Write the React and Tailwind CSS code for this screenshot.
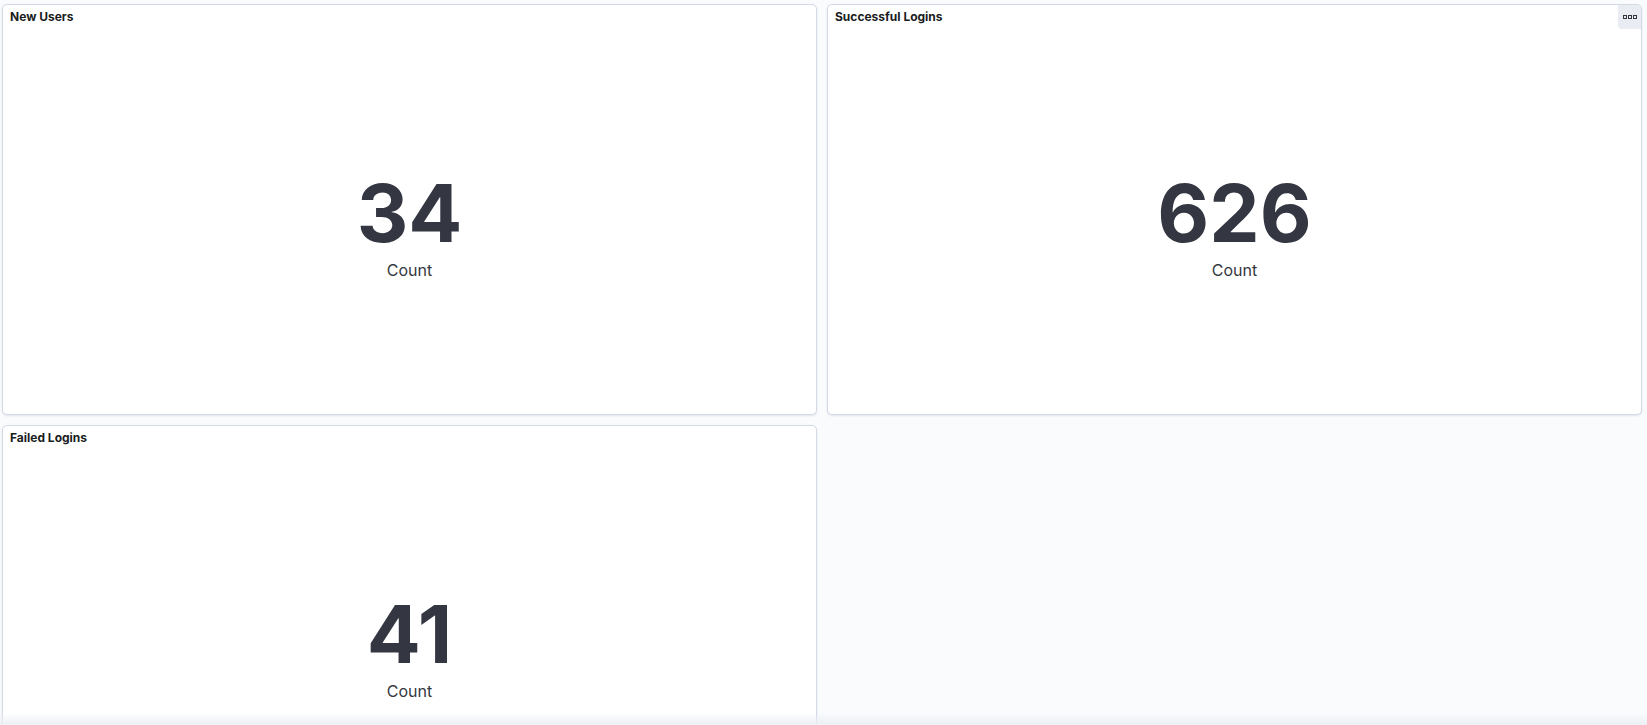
import React from 'react';

const panels = [
  { title: 'New Users', value: '34' },
  { title: 'Successful Logins', value: '626', menu: true },
  { title: 'Failed Logins', value: '41' },
];

function BoxesIcon() {
  return (
    <svg width="16" height="16" viewBox="0 0 16 16" fill="none">
      <rect x="1.5" y="6.5" width="3" height="3" stroke="#343741" strokeWidth="1" />
      <rect x="6.5" y="6.5" width="3" height="3" stroke="#343741" strokeWidth="1" />
      <rect x="11.5" y="6.5" width="3" height="3" stroke="#343741" strokeWidth="1" />
    </svg>
  );
}

function MetricPanel({ title, value, menu }) {
  return (
    <div className="relative flex h-[411px] flex-col rounded-[5px] border border-[#d3dae6] bg-white shadow-[0_1px_2px_rgba(152,162,179,0.25)]">
      <div className="h-[29px] px-[7px] pt-[3px] text-[12px] font-bold leading-[18px] text-[#1a1c21]">
        {title}
      </div>
      {menu && (
        <button className="absolute right-0 top-0 flex h-[24px] w-[23px] items-center justify-center rounded-bl-[4px] rounded-tr-[4px] bg-[#e9edf3]">
          <BoxesIcon />
        </button>
      )}
      <div className="flex flex-1 flex-col items-center justify-center pt-[7px]">
        <div className="text-[80px] font-bold leading-none text-[#343741]">{value}</div>
        <div className="mt-[5px] text-[16px] leading-[24px] text-[#343741]">Count</div>
      </div>
    </div>
  );
}

export default function App() {
  return (
    <div className="h-[725px] overflow-hidden bg-[#fafbfd]" style={{ fontFamily: 'Inter, "Noto Sans", sans-serif' }}>
      <div className="grid grid-cols-2 gap-x-[10px] gap-y-[10px] pl-[2px] pr-[5px] pt-[4px]">
        {panels.map((p) => (
          <MetricPanel key={p.title} {...p} />
        ))}
      </div>
      <div className="pointer-events-none fixed bottom-0 left-0 right-0 h-[12px] bg-gradient-to-t from-[#eceff4] to-transparent" />
    </div>
  );
}
